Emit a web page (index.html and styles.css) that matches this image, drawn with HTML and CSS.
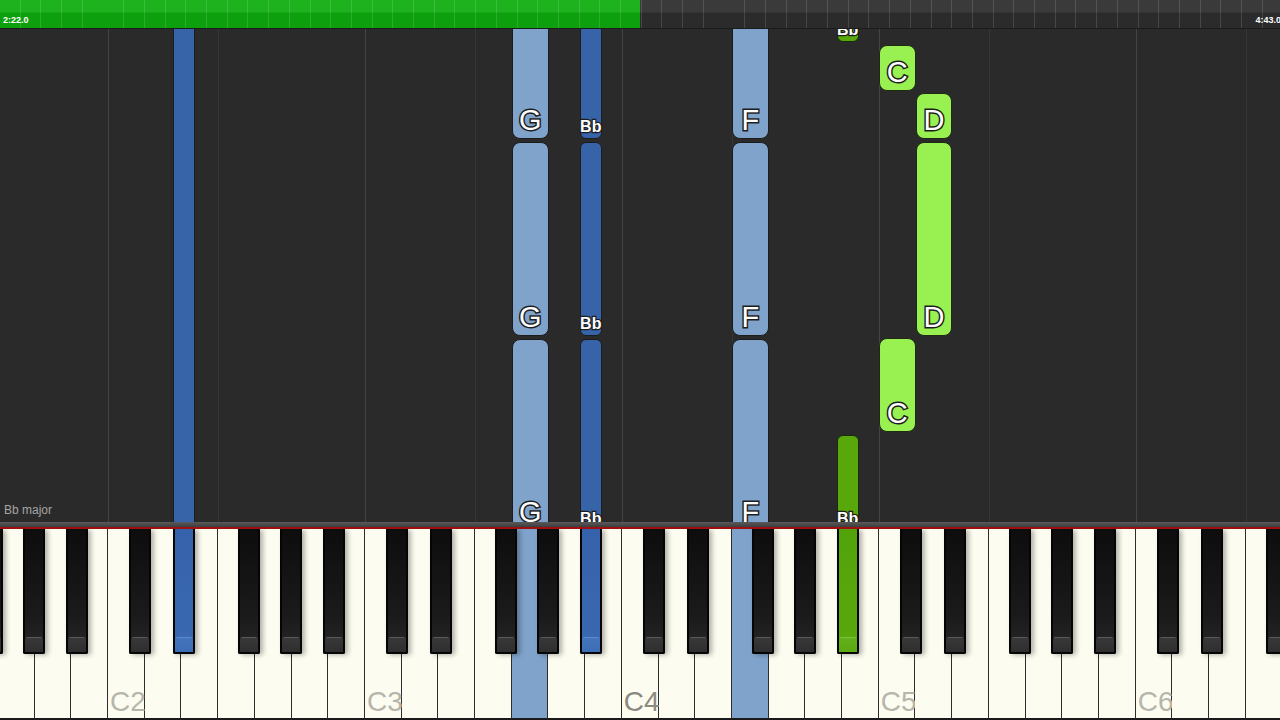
FILE: index.html
```html
<!DOCTYPE html>
<html lang="en">
<head>
<meta charset="utf-8">
<title>Piano roll</title>
<link rel="stylesheet" href="styles.css">
</head>
<body>
<div class="app">
  <header class="topbar">
    <span class="time">2:22.0</span>
    <span class="time end">4:43.0</span>
  </header>

  <main class="roll">
    <div class="grid">
      <i></i><i></i><i></i><i class="lc"></i><i></i><i></i><i class="lf"></i>
      <i></i><i></i><i></i><i class="lc"></i><i></i><i></i><i class="lf"></i>
      <i></i><i></i><i></i><i class="lc"></i><i></i><i></i><i class="lf"></i>
      <i></i><i></i><i></i><i class="lc"></i><i></i><i></i><i class="lf"></i>
      <i></i><i></i><i></i><i class="lc"></i><i></i><i></i><i class="lf"></i>
    </div>

    <!-- D#2 held -->
    <div class="note blk ds dblue" style="--i:5;--t:-10px;--h:520px"></div>

    <!-- G3 -->
    <div class="note lblue" style="--i:14;--t:-10px;--h:120px"><span class="lbl">G</span></div>
    <div class="note lblue" style="--i:14;--t:113px;--h:194px"><span class="lbl">G</span></div>
    <div class="note lblue" style="--i:14;--t:310px;--h:192px"><span class="lbl">G</span></div>

    <!-- A#3 -->
    <div class="note blk as dblue" style="--i:16;--t:-10px;--h:120px"><span class="lbl sm">Bb</span></div>
    <div class="note blk as dblue" style="--i:16;--t:113px;--h:194px"><span class="lbl sm">Bb</span></div>
    <div class="note blk as dblue" style="--i:16;--t:310px;--h:192px"><span class="lbl sm">Bb</span></div>

    <!-- F4 -->
    <div class="note lblue" style="--i:20;--t:-10px;--h:120px"><span class="lbl">F</span></div>
    <div class="note lblue" style="--i:20;--t:113px;--h:194px"><span class="lbl">F</span></div>
    <div class="note lblue" style="--i:20;--t:310px;--h:192px"><span class="lbl">F</span></div>

    <!-- A#4 -->
    <div class="note blk as dgreen" style="--i:23;--t:-30px;--h:43px"><span class="lbl sm">Bb</span></div>
    <div class="note blk as dgreen" style="--i:23;--t:406px;--h:96px"><span class="lbl sm">Bb</span></div>

    <!-- C5 -->
    <div class="note lgreen" style="--i:24;--t:16px;--h:46px"><span class="lbl">C</span></div>
    <div class="note lgreen" style="--i:24;--t:309px;--h:94px"><span class="lbl">C</span></div>

    <!-- D5 -->
    <div class="note lgreen" style="--i:25;--t:64px;--h:46px"><span class="lbl">D</span></div>
    <div class="note lgreen" style="--i:25;--t:113px;--h:194px"><span class="lbl">D</span></div>

    <span class="key-sig">Bb major</span>
  </main>

  <div class="rail"></div>
  <div class="redline"></div>

  <section class="keyboard">
    <div class="whites">
      <div class="wk"></div><div class="wk"></div><div class="wk"></div>
      <div class="wk"><span class="oct">C2</span></div><div class="wk"></div><div class="wk"></div><div class="wk"></div><div class="wk"></div><div class="wk"></div><div class="wk"></div>
      <div class="wk"><span class="oct">C3</span></div><div class="wk"></div><div class="wk"></div><div class="wk"></div><div class="wk pressed-blue"></div><div class="wk"></div><div class="wk"></div>
      <div class="wk"><span class="oct mid">C4</span></div><div class="wk"></div><div class="wk"></div><div class="wk pressed-blue"></div><div class="wk"></div><div class="wk"></div><div class="wk"></div>
      <div class="wk"><span class="oct">C5</span></div><div class="wk"></div><div class="wk"></div><div class="wk"></div><div class="wk"></div><div class="wk"></div><div class="wk"></div>
      <div class="wk"><span class="oct">C6</span></div><div class="wk"></div><div class="wk"></div><div class="wk"></div>
    </div>

    <div class="bk fs" style="--i:0"></div>
    <div class="bk gs" style="--i:1"></div>
    <div class="bk as" style="--i:2"></div>

    <div class="bk cs" style="--i:4"></div>
    <div class="bk ds kblue" style="--i:5"></div>
    <div class="bk fs" style="--i:7"></div>
    <div class="bk gs" style="--i:8"></div>
    <div class="bk as" style="--i:9"></div>

    <div class="bk cs" style="--i:11"></div>
    <div class="bk ds" style="--i:12"></div>
    <div class="bk fs" style="--i:14"></div>
    <div class="bk gs" style="--i:15"></div>
    <div class="bk as kblue" style="--i:16"></div>

    <div class="bk cs" style="--i:18"></div>
    <div class="bk ds" style="--i:19"></div>
    <div class="bk fs" style="--i:21"></div>
    <div class="bk gs" style="--i:22"></div>
    <div class="bk as kgreen" style="--i:23"></div>

    <div class="bk cs" style="--i:25"></div>
    <div class="bk ds" style="--i:26"></div>
    <div class="bk fs" style="--i:28"></div>
    <div class="bk gs" style="--i:29"></div>
    <div class="bk as" style="--i:30"></div>

    <div class="bk cs" style="--i:32"></div>
    <div class="bk ds" style="--i:33"></div>
    <div class="bk fs" style="--i:35"></div>
  </section>
</div>
</body>
</html>
```
FILE: styles.css
```css
:root {
  --w: 36.71px;
  --x0: -2.1px;
}

* { box-sizing: border-box; }

html, body {
  margin: 0;
  padding: 0;
  width: 1280px;
  height: 720px;
  overflow: hidden;
  background: #2a2a2a;
  font-family: "Liberation Sans", Arial, sans-serif;
}

.app {
  display: flex;
  flex-direction: column;
  width: 1280px;
  height: 720px;
}

/* ---------- top progress bar ---------- */
.topbar {
  flex: 0 0 29px;
  display: flex;
  justify-content: space-between;
  align-items: flex-end;
  padding: 0 0 3px 3px;
  border-bottom: 1px solid #1b1b1b;
  overflow: hidden;
  background:
    repeating-linear-gradient(90deg, transparent 0 19.7px, rgba(255,255,255,0.13) 19.7px 20.7px),
    linear-gradient(#1fb21f 0 12px, #0e9f0e 13px 100%) 0 0 / 640px 100% no-repeat,
    linear-gradient(#3a3a3a 0 12px, #2b2b2b 13px 100%);
}

.time {
  color: #fff;
  font-size: 9px;
  font-weight: bold;
  line-height: 1;
}

.time.end { margin-right: -1px; }

/* ---------- note roll ---------- */
.roll {
  flex: 1 1 auto;
  position: relative;
  overflow: hidden;
  background: #2a2a2a;
}

.grid {
  position: absolute;
  inset: 0 auto 0 var(--x0);
  display: flex;
}

.grid i {
  flex: 0 0 var(--w);
  height: 100%;
}

.grid i.lc { border-left: 1px solid #444; }
.grid i.lf { border-left: 1px solid #363636; }

.note {
  position: absolute;
  left: calc(var(--x0) + var(--i) * var(--w));
  top: var(--t);
  width: var(--w);
  height: var(--h);
  border: 1px solid #1c1c1c;
  border-radius: 8px;
  display: flex;
  flex-direction: column;
  justify-content: flex-end;
  align-items: center;
  padding-bottom: 3px;
}

.note.blk {
  left: calc(var(--x0) + var(--i) * var(--w) + var(--o) - 11px);
  width: 22px;
  border-radius: 6px;
  padding-bottom: 3px;
}

.cs { --o: -4.5px; }
.ds { --o: 3px; }
.fs { --o: -6px; }
.gs { --o: -0.5px; }
.as { --o: 5.5px; }

.lblue  { background: #80a3cb; }
.dblue  { background: #3763a9; }
.lgreen { background: #98f150; border-color: #1e2a14; }
.dgreen { background: #58a80c; border-color: #1a2a0c; }

.lbl {
  color: #fff;
  font-size: 29px;
  line-height: 1;
  -webkit-text-stroke: 3px #1d1d1d;
  paint-order: stroke fill;
}

.lbl.sm {
  font-size: 16px;
  font-weight: bold;
  -webkit-text-stroke: 2.5px #1d1d1d;
}

.key-sig {
  position: absolute;
  left: 4px;
  bottom: 6px;
  color: #a5a5a5;
  font-size: 12px;
  line-height: 1;
}

/* ---------- keyboard ---------- */
.rail {
  flex: 0 0 5px;
  background: linear-gradient(#5a5a5a, #3d3d3d);
}

.redline {
  flex: 0 0 2px;
  background: #a00f0f;
}

.keyboard {
  flex: 0 0 191px;
  position: relative;
  overflow: hidden;
}

.whites {
  display: flex;
  height: 100%;
  margin-left: var(--x0);
}

.wk {
  flex: 0 0 var(--w);
  position: relative;
  background: #fdfcf0;
  border-right: 1px solid #2e2e2e;
  border-bottom: 2px solid #1a1a1a;
}

.wk.pressed-blue { background: #80a3cb; }

.oct {
  position: absolute;
  left: 2px;
  bottom: 2px;
  font-size: 28px;
  line-height: 1;
  color: #b6b6ad;
}

.oct.mid { color: #8a8a82; }

.bk {
  position: absolute;
  top: 0;
  left: calc(var(--x0) + var(--i) * var(--w) + var(--o) - 11px);
  width: 22px;
  height: 125px;
  border: 2px solid #050505;
  border-top: 0;
  border-radius: 0 0 2px 2px;
  background: linear-gradient(#0d0d0d, #1a1a1a 70%, #222 88%);
  box-shadow: 3px 1px 5px rgba(0, 0, 0, 0.3);
}

.bk::after {
  content: "";
  position: absolute;
  left: 0;
  right: 0;
  bottom: 0;
  height: 15px;
  border-radius: 3px 3px 1px 1px;
  background: linear-gradient(#5a5a5a 0 1px, #383838 1px, #2e2e2e);
}

.bk.kblue { background: linear-gradient(#3562aa, #3a68b0 85%); }
.bk.kblue::after { background: linear-gradient(#5d8ad0 0 1px, #4375bd 1px, #3d6db6); }

.bk.kgreen { background: linear-gradient(#52a20a, #58a80c 85%); }
.bk.kgreen::after { background: linear-gradient(#7cc43a 0 1px, #62b01a 1px, #5aaa12); }
```
